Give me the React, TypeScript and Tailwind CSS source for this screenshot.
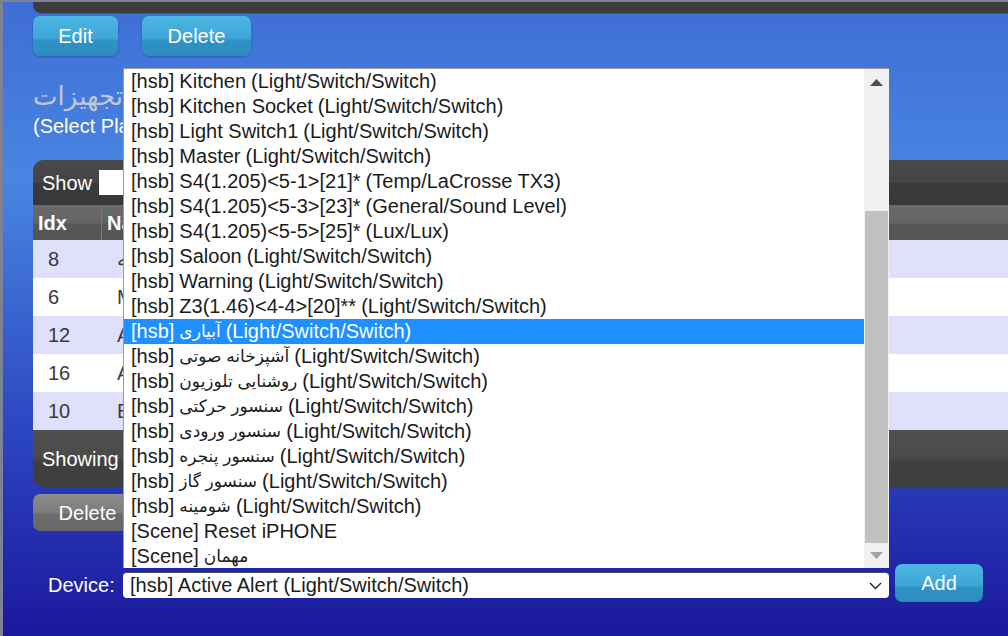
type Item = { tag: string; fa?: string; en?: string; suffix?: string }

const items: Item[] = [
  { tag: '[hsb]', en: 'Kitchen', suffix: '(Light/Switch/Switch)' },
  { tag: '[hsb]', en: 'Kitchen Socket', suffix: '(Light/Switch/Switch)' },
  { tag: '[hsb]', en: 'Light Switch1', suffix: '(Light/Switch/Switch)' },
  { tag: '[hsb]', en: 'Master', suffix: '(Light/Switch/Switch)' },
  { tag: '[hsb]', en: 'S4(1.205)<5-1>[21]*', suffix: '(Temp/LaCrosse TX3)' },
  { tag: '[hsb]', en: 'S4(1.205)<5-3>[23]*', suffix: '(General/Sound Level)' },
  { tag: '[hsb]', en: 'S4(1.205)<5-5>[25]*', suffix: '(Lux/Lux)' },
  { tag: '[hsb]', en: 'Saloon', suffix: '(Light/Switch/Switch)' },
  { tag: '[hsb]', en: 'Warning', suffix: '(Light/Switch/Switch)' },
  { tag: '[hsb]', en: 'Z3(1.46)<4-4>[20]**', suffix: '(Light/Switch/Switch)' },
  { tag: '[hsb]', fa: 'آبیاری', suffix: '(Light/Switch/Switch)' },
  { tag: '[hsb]', fa: 'آشپزخانه صوتی', suffix: '(Light/Switch/Switch)' },
  { tag: '[hsb]', fa: 'روشنایی تلوزیون', suffix: '(Light/Switch/Switch)' },
  { tag: '[hsb]', fa: 'سنسور حرکتی', suffix: '(Light/Switch/Switch)' },
  { tag: '[hsb]', fa: 'سنسور ورودی', suffix: '(Light/Switch/Switch)' },
  { tag: '[hsb]', fa: 'سنسور پنجره', suffix: '(Light/Switch/Switch)' },
  { tag: '[hsb]', fa: 'سنسور گاز', suffix: '(Light/Switch/Switch)' },
  { tag: '[hsb]', fa: 'شومینه', suffix: '(Light/Switch/Switch)' },
  { tag: '[Scene]', en: 'Reset iPHONE' },
  { tag: '[Scene]', fa: 'مهمان' },
]

const rows = [
  { idx: 8, name: 'آشپزخانه' },
  { idx: 6, name: 'Master' },
  { idx: 12, name: 'Active Alert' },
  { idx: 16, name: 'All Lights' },
  { idx: 10, name: 'Entrance' },
]

function BlueButton({ label, width }: { label: string; width: string }) {
  return (
    <button
      className={`${width} h-[40px] rounded-[7px] bg-[linear-gradient(to_bottom,#4cb6e4_0%,#3ea6d8_55%,#2f92c4_62%,#2d8cbf_100%)] text-white text-[20px] shadow-[0_1px_2px_rgba(0,0,0,0.25)]`}
    >
      {label}
    </button>
  )
}

function DeviceList() {
  return (
    <div className="absolute left-[120px] top-[66px] w-[766px] h-[500px] bg-white flex border-l border-t border-[#9a9a9a]">
      <div className="flex-1 overflow-hidden">
        {items.map((item, i) => (
          <div
            key={i}
            className={`h-[25px] leading-[25px] pl-[7px] text-[20px] whitespace-nowrap flex gap-[5px] ${
              i === 10 ? 'bg-[#1e90ff] text-white' : 'text-[#1b1b1b]'
            }`}
          >
            <span>{item.tag}</span>
            {item.en && <span>{item.en}</span>}
            {item.fa && (
              <bdi dir="rtl" className="text-[17px]">
                {item.fa}
              </bdi>
            )}
            {item.suffix && <span>{item.suffix}</span>}
          </div>
        ))}
      </div>

      {/* Scrollbar */}
      <div className="w-[25px] flex flex-col bg-[#f1f1f1]">
        <div className="h-[142px] flex justify-center pt-[10px]">
          <svg width="13" height="7" viewBox="0 0 13 7">
            <polygon points="6.5,0 13,7 0,7" fill="#505050" />
          </svg>
        </div>
        <div className="h-[333px] mx-[1px] bg-[#c1c1c1]"></div>
        <div className="h-[25px] flex justify-center pt-[9px]">
          <svg width="13" height="7" viewBox="0 0 13 7">
            <polygon points="0,0 13,0 6.5,7" fill="#a3a3a3" />
          </svg>
        </div>
      </div>
    </div>
  )
}

export default function App() {
  return (
    <div className="relative w-full h-[636px] overflow-hidden border-l-[3px] border-t-2 border-[#7d8296] bg-[linear-gradient(to_bottom,#3f6dd5_0%,#4886e2_28%,#2c45c0_68%,#1b189b_100%)] font-[family-name:'Liberation_Sans','DejaVu_Sans',sans-serif]">
      <div className="pl-[30px]">
        {/* Top bar */}
        <div className="h-[12px] bg-[#3b3b3b] rounded-bl-[9px] border-b border-[#555]"></div>

        {/* Edit / Delete */}
        <div className="flex gap-[24px] mt-[2px]">
          <BlueButton label="Edit" width="w-[85px]" />
          <BlueButton label="Delete" width="w-[109px]" />
        </div>

        {/* Title */}
        <div className="mt-[24px] h-[32px] text-[26px] leading-[32px] text-[#c3c6d6] w-[90px] text-right" dir="rtl">
          تجهیزات
        </div>
        <div className="mt-[2px] text-[20px] leading-[24px] text-white whitespace-nowrap">
          (Select Plan to Add/Remove Devices)
        </div>

        {/* Table panel */}
        <div className="mt-[22px] rounded-tl-[10px] overflow-hidden">
          <div className="h-[45px] flex items-center gap-[7px] pl-[9px] bg-[linear-gradient(to_bottom,#4a4a4a_0%,#444_50%,#3a3a3a_52%,#383838_100%)]">
            <span className="text-white text-[20px]">Show</span>
            <div className="w-[80px] h-[25px] bg-white"></div>
          </div>
          <div className="h-[35px] flex text-white text-[20px] font-bold bg-[linear-gradient(to_bottom,#6a6a6a_0%,#646464_50%,#575757_55%,#555_100%)]">
            <div className="w-[68px] pl-[5px] flex items-center">Idx</div>
            <div className="flex-1 pl-[5px] flex items-center border-l border-[#7a7a7a]">Name</div>
          </div>
          {rows.map((r, i) => (
            <div
              key={r.idx}
              className={`h-[38px] flex items-center text-[20px] text-[#3a3a3a] ${
                i % 2 === 0 ? 'bg-[#dfe0fc]' : 'bg-white'
              }`}
            >
              <div className="w-[68px] pl-[15px]">{r.idx}</div>
              <div className="flex-1 pl-[16px]">{r.name}</div>
            </div>
          ))}
          <div className="h-[57px] flex items-center pl-[9px] rounded-bl-[10px] bg-[linear-gradient(to_bottom,#505050_0%,#4a4a4a_50%,#404040_55%,#3d3d3d_100%)] text-white text-[20px]">
            Showing 1 to 5 of 5 entries
          </div>
        </div>

        {/* Delete selected */}
        <button className="mt-[7px] w-[109px] h-[37px] rounded-[7px] bg-[linear-gradient(to_bottom,#8c8c8c_0%,#7c7c7c_50%,#6c6c6c_55%,#666_100%)] text-white text-[20px]">
          Delete
        </button>

        {/* Device row */}
        <div className="mt-[36px] flex items-center">
          <span className="w-[90px] pl-[15px] text-white text-[20px]">Device:</span>
          <div className="relative w-[766px] h-[26px] bg-white rounded-[4px] border-t border-[#4a4a6a] flex items-center pl-[7px] text-[20px] text-[#1b1b1b] whitespace-nowrap">
            [hsb] Active Alert (Light/Switch/Switch)
            <svg className="absolute right-[7px] top-[9px]" width="13" height="8" viewBox="0 0 13 8">
              <polyline points="1,1 6.5,6.5 12,1" fill="none" stroke="#222" strokeWidth="1.4" />
            </svg>
          </div>
          <div className="ml-[6px] -mt-[3px]">
            <button className="w-[88px] h-[38px] rounded-[7px] bg-[linear-gradient(to_bottom,#4cb6e4_0%,#3ea6d8_55%,#2f92c4_62%,#2d8cbf_100%)] text-white text-[20px]">
              Add
            </button>
          </div>
        </div>
      </div>

      <DeviceList />
    </div>
  )
}
